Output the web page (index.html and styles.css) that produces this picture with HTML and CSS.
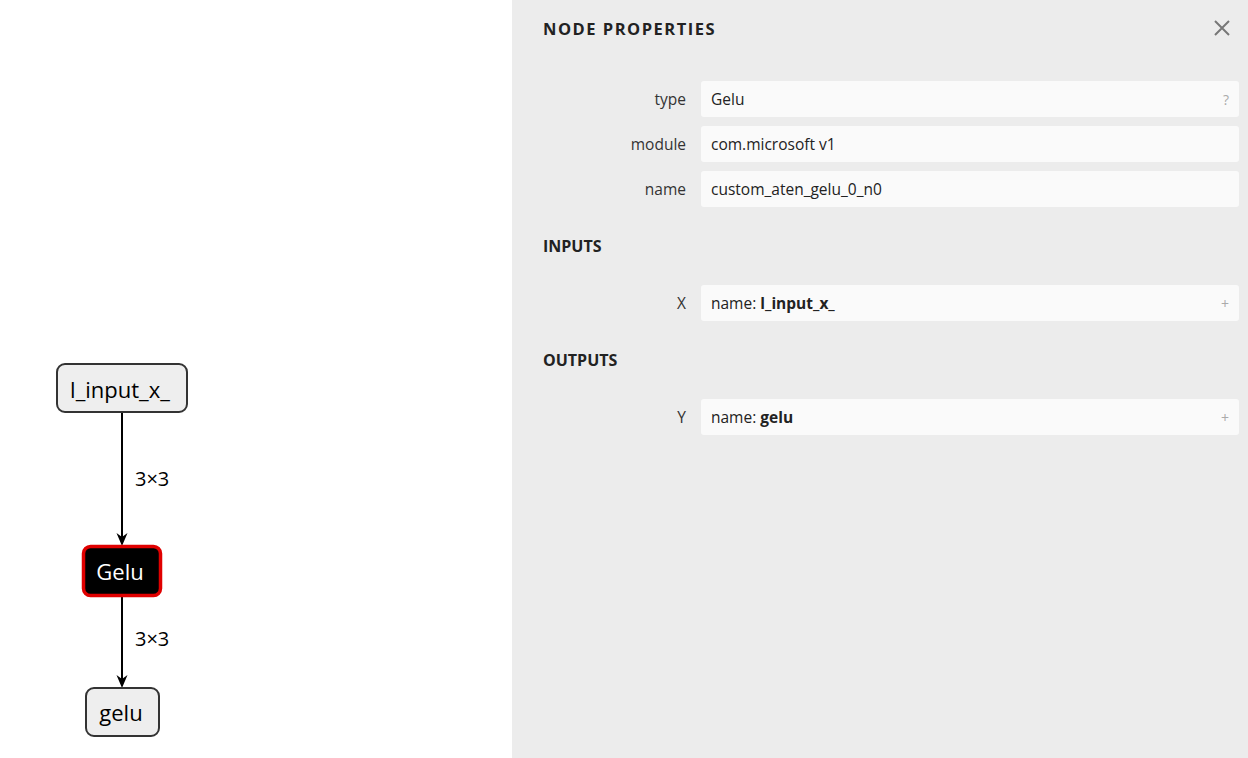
FILE: index.html
```html
<!DOCTYPE html>
<html lang="en">
<head>
  <meta charset="UTF-8">
  <title>Node properties</title>
  <link rel="stylesheet" href="styles.css">
</head>
<body>

  <div class="graph">
    <svg class="graph-canvas" width="512" height="758" viewBox="0 0 512 758">
      <!-- edges -->
      <line class="edge" x1="122" y1="413" x2="122" y2="540"></line>
      <path class="arrow" d="M116.5,533 L122,546 L127.5,533 L122,537 Z"></path>
      <text class="edge-label" x="135" y="486">3×3</text>

      <line class="edge" x1="122" y1="597" x2="122" y2="682"></line>
      <path class="arrow" d="M116.5,675 L122,688 L127.5,675 L122,679 Z"></path>
      <text class="edge-label" x="135" y="646">3×3</text>

      <!-- nodes -->
      <rect class="node" x="57" y="364" width="130" height="48" rx="8"></rect>
      <text class="node-text" x="120" y="398">l_input_x_</text>

      <rect class="node node-selected" x="83.5" y="546.5" width="77" height="49" rx="7"></rect>
      <text class="node-text node-text-light" x="120" y="580">Gelu</text>

      <rect class="node" x="86" y="688" width="73" height="48" rx="8"></rect>
      <text class="node-text" x="121" y="721">gelu</text>
    </svg>
  </div>

  <div class="sidebar">
    <div class="sidebar-header">
      <div class="sidebar-title">NODE PROPERTIES</div>
      <svg class="close" width="16" height="16" viewBox="0 0 16 16">
        <path d="M1,1 L15,15 M15,1 L1,15"></path>
      </svg>
    </div>

    <div class="props">
      <div class="row">
        <div class="label">type</div>
        <div class="value">Gelu<span class="value-btn">?</span></div>
      </div>
      <div class="row">
        <div class="label">module</div>
        <div class="value">com.microsoft v1</div>
      </div>
      <div class="row">
        <div class="label">name</div>
        <div class="value">custom_aten_gelu_0_n0</div>
      </div>
    </div>

    <div class="section-title">INPUTS</div>
    <div class="props">
      <div class="row">
        <div class="label">X</div>
        <div class="value">name: <b>l_input_x_</b><span class="value-btn">+</span></div>
      </div>
    </div>

    <div class="section-title">OUTPUTS</div>
    <div class="props">
      <div class="row">
        <div class="label">Y</div>
        <div class="value">name: <b>gelu</b><span class="value-btn">+</span></div>
      </div>
    </div>
  </div>

</body>
</html>
```

FILE: styles.css
```css
body {
  margin: 0;
  height: 758px;
  display: flex;
  font-family: "Open Sans", "Noto Sans", sans-serif;
  background: white;
  overflow: hidden;
}

.graph {
  width: 512px;
  flex-shrink: 0;
}

.graph-canvas {
  display: block;
}

.edge {
  stroke: #000;
  stroke-width: 2;
}

.arrow {
  fill: #000;
}

.edge-label {
  font-family: "Open Sans", sans-serif;
  font-size: 20px;
  fill: #000;
}

.node {
  fill: #eeeeee;
  stroke: #333;
  stroke-width: 2;
}

.node-selected {
  fill: #000;
  stroke: #e00000;
  stroke-width: 3.5;
}

.node-text {
  font-family: "Open Sans", sans-serif;
  font-size: 22px;
  text-anchor: middle;
  fill: #000;
}

.node-text-light {
  fill: #fff;
}

.sidebar {
  flex: 1;
  background: #ececec;
  color: #222;
  padding: 0 9px 0 31px;
}

.sidebar-header {
  height: 56px;
  display: flex;
  align-items: center;
  justify-content: space-between;
  padding-right: 9px;
}

.sidebar-title {
  font-size: 16.5px;
  font-weight: bold;
  letter-spacing: 1.5px;
  color: #222;
}

.close path {
  stroke: #777;
  stroke-width: 2;
  fill: none;
}

.props {
  display: flex;
  flex-direction: column;
  gap: 9px;
}

.sidebar-header + .props {
  margin-top: 25px;
}

.row {
  display: flex;
  align-items: center;
  gap: 15px;
}

.label {
  width: 143px;
  text-align: right;
  font-size: 15.5px;
  color: #333;
}

.value {
  flex: 1;
  height: 36px;
  display: flex;
  align-items: center;
  padding: 0 10px;
  background: #fafafa;
  border-radius: 3px;
  font-size: 15.5px;
  color: #222;
  white-space: pre;
}

.value b {
  font-weight: bold;
}

.value-btn {
  margin-left: auto;
  font-size: 14px;
  color: #aaa;
}

.section-title {
  height: 78px;
  display: flex;
  align-items: center;
  font-size: 16px;
  font-weight: bold;
  color: #222;
}
```
